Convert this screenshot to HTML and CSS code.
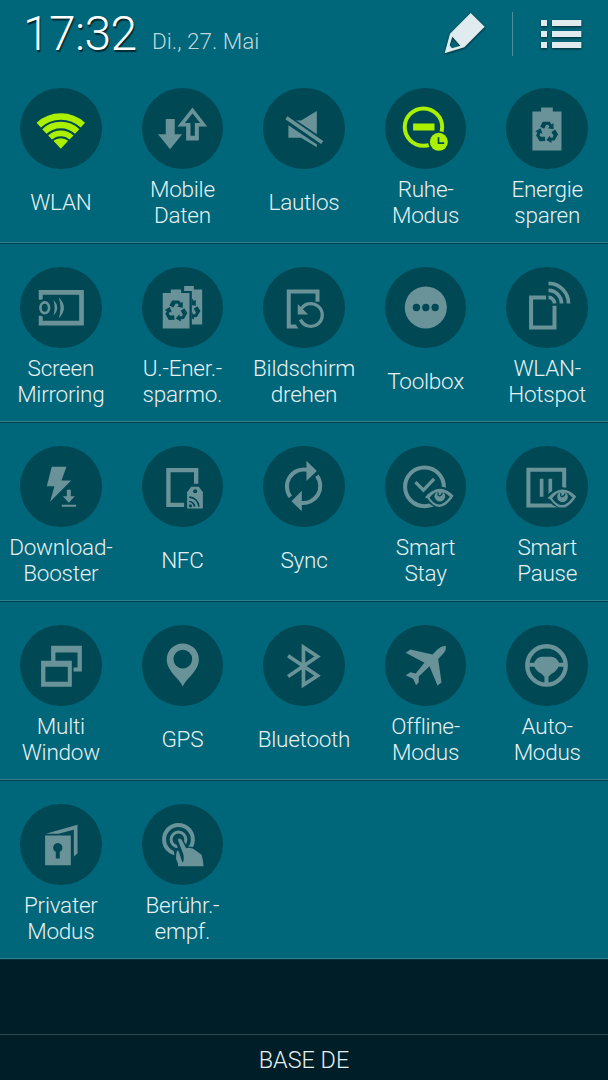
FILE: index.html
```
<!DOCTYPE html>
<html lang="de">
<head>
  <meta charset="UTF-8">
  <title>Schnelleinstellungen</title>
  <link rel="stylesheet" href="styles.css">
</head>
<body>
  <!-- shapes used by more than one icon -->
  <svg class="defs" width="0" height="0">
    <defs>
      <path id="arm" d="M-20-17-12-32H9L14-24 20-28 20-10 3-13 8-17 4-23-2-22-8-11z"/>
      <g id="recycle">
        <use href="#arm"/>
        <use href="#arm" transform="rotate(120)"/>
        <use href="#arm" transform="rotate(240)"/>
      </g>
      <g id="eye">
        <path class="cut" d="M-50-2Q0-63 52-4Q0 62-50-2z"/>
        <path d="M-43 0Q0-49 43-5L37 4Q0 53-35 3z"/>
        <path class="cut" d="M-29 1Q-2-36 32-2Q0 42-29 1z"/>
        <circle cx="2" cy="-4" r="16"/>
        <path class="cutline" d="M-3-15q-2 12 5 10t7-9" stroke-width="4"/>
      </g>
      <clipPath id="back"><path d="M149 60h40v120h-40z"/></clipPath>
    </defs>
  </svg>

  <div class="panel">
    <header class="header">
      <span class="clock">17:32</span>
      <span class="date">Di., 27. Mai</span>
      <svg class="pencil" viewBox="0 0 126 126"><path fill-rule="evenodd" d="M80 0l42 41-61 62-59 18L18 62zM25 71L17 97l7 9 25-8z"/></svg>
      <span class="separator"></span>
      <svg class="list" viewBox="0 0 123 87"><path d="M0 0h18v18H0zM33 0h88v18H33zM0 33h18v18H0zM33 33h88v18H33zM0 66h18v18H0zM33 66h88v18H33z"/></svg>
    </header>

    <div class="row">
      <div class="tile on">
        <svg class="icon" viewBox="0 0 244 244">
          <g class="line">
            <path stroke-width="19" d="M56 111A97 97 0 0 1 188 111"/>
            <path stroke-width="19" d="M73 130A71.500 71.500 0 0 1 171 130"/>
            <path stroke-width="17" d="M90 148A47 47 0 0 1 154 148"/>
          </g>
          <path d="M122 182L100 158A34 34 0 0 1 144 158z"/>
        </svg>
        <div class="label">WLAN</div>
      </div>
      <div class="tile">
        <svg class="icon" viewBox="0 0 244 244">
          <path d="M71 93h27v45h22l-36 45-36-45h23z"/>
          <path fill-rule="evenodd" d="M151 58l44 57h-25v42h-38v-42h-26zM151 76l-23 29h17v38h13v-38h16z"/>
        </svg>
        <div class="label">Mobile<br>Daten</div>
      </div>
      <div class="tile">
        <svg class="icon" viewBox="0 0 244 244">
          <path d="M76 97h38l47-28v108l-47-28H76z"/>
          <path class="cutline" stroke-width="25" d="M62 87l122 82"/>
          <path class="line" stroke-width="11" d="M70 89l107 74"/>
        </svg>
        <div class="label">Lautlos</div>
      </div>
      <div class="tile on">
        <svg class="icon" viewBox="0 0 244 244">
          <circle class="line" cx="115" cy="117" r="56" stroke-width="12"/>
          <path d="M84 106h64v21H84z"/>
          <circle class="cut" cx="161" cy="161" r="32"/>
          <circle cx="161" cy="161" r="27"/>
          <path class="cutline" stroke-width="5" d="M160 147v18h17"/>
        </svg>
        <div class="label">Ruhe-<br>Modus</div>
      </div>
      <div class="tile">
        <svg class="icon" viewBox="0 0 244 244">
          <path d="M79 70h26V58h35v12h26v117H79z"/>
          <use class="cut" href="#recycle" transform="translate(122 133)"/>
        </svg>
        <div class="label">Energie<br>sparen</div>
      </div>
    </div>

    <div class="row">
      <div class="tile">
        <svg class="icon" viewBox="0 0 244 244">
          <path fill-rule="evenodd" d="M56 69h135v106H56zM68 83v78h109V83z"/>
          <path class="cut" d="M50 98h20v48H50z"/>
          <ellipse class="cut" cx="74" cy="122" rx="22" ry="27"/>
          <ellipse class="line" cx="74" cy="122" rx="13" ry="16" stroke-width="8"/>
          <path d="M100 98q23 24 0 48 7-24 0-48zM116 91q31 31 0 62 10-31 0-62z"/>
        </svg>
        <div class="label">Screen<br>Mirroring</div>
      </div>
      <div class="tile">
        <svg class="icon" viewBox="0 0 244 244">
          <path d="M62 78h24V67h31v11h25v106H62z"/>
          <path d="M126 57h29v10h25v105h-31V72h-23z"/>
          <use class="cut" href="#recycle" transform="translate(102 132)"/>
          <g clip-path="url(#back)"><use class="cut" href="#recycle" transform="translate(141 126)"/></g>
        </svg>
        <div class="label">U.-Ener.-<br>sparmo.</div>
      </div>
      <div class="tile">
        <svg class="icon" viewBox="0 0 244 244">
          <path class="line" stroke-width="12" d="M77 178V73h86v105z"/>
          <path class="cut" d="M98 104h80v90h-66l-14-22z"/>
          <path class="line" stroke-width="10" d="M112 130A34 34 0 1 1 112 157"/>
          <path d="M104 111v31h31z"/>
        </svg>
        <div class="label">Bildschirm<br>drehen</div>
      </div>
      <div class="tile">
        <svg class="icon" viewBox="0 0 244 244">
          <circle cx="122" cy="121" r="63"/>
          <g class="cut"><circle cx="94" cy="121" r="11"/><circle cx="122" cy="121" r="11"/><circle cx="150" cy="121" r="11"/></g>
        </svg>
        <div class="label">Toolbox</div>
      </div>
      <div class="tile">
        <svg class="icon" viewBox="0 0 244 244">
          <path class="line" stroke-width="12" d="M120 91H75v90h70v-65"/>
          <g class="line" stroke-width="11">
            <path d="M127 49a60 60 0 0 1 60 60"/>
            <path d="M127 70a39 39 0 0 1 39 39"/>
            <path d="M127 91a18 18 0 0 1 18 18"/>
          </g>
        </svg>
        <div class="label">WLAN-<br>Hotspot</div>
      </div>
    </div>

    <div class="row">
      <div class="tile">
        <svg class="icon" viewBox="0 0 244 244">
          <path d="M95 62h44l-15 41h29l-63 64 13-47H80z"/>
          <path d="M140 131h12v19h12l-18 20-18-20h12zM125 176h43v6h-43z"/>
        </svg>
        <div class="label">Download-<br>Booster</div>
      </div>
      <div class="tile">
        <svg class="icon" viewBox="0 0 244 244">
          <path class="line" stroke-width="13" d="M126 176H79V72h83v41"/>
          <path d="M135 138l12-16h23l12 16v49h-47z"/>
          <circle class="cut" cx="159" cy="135" r="6"/>
          <circle class="cut" cx="145" cy="179" r="5"/>
          <path class="cutline" stroke-width="5" d="M141 166a16 16 0 0 1 16 16M141 153a29 29 0 0 1 29 29"/>
        </svg>
        <div class="label">NFC</div>
      </div>
      <div class="tile">
        <svg class="icon" viewBox="0 0 244 244">
          <path class="line" stroke-width="12" d="M132 71A51 51 0 0 0 82 152M112 170A51 51 0 0 0 161 89"/>
          <path d="M130 44l31 31-31 30zM116 134v61l-31-30z"/>
        </svg>
        <div class="label">Sync</div>
      </div>
      <div class="tile">
        <svg class="icon" viewBox="0 0 244 244">
          <circle class="line" cx="118" cy="122" r="58" stroke-width="12"/>
          <path class="line" stroke-width="10" d="M91 108l24 24 32-34"/>
          <use href="#eye" transform="translate(162 154)"/>
        </svg>
        <div class="label">Smart<br>Stay</div>
      </div>
      <div class="tile">
        <svg class="icon" viewBox="0 0 244 244">
          <path class="line" stroke-width="12" d="M67 71h107v107H67z"/>
          <path d="M101 98h11v54h-11zM127 98h11v54h-11z"/>
          <use href="#eye" transform="translate(167 156)"/>
        </svg>
        <div class="label">Smart<br>Pause</div>
      </div>
    </div>

    <div class="row">
      <div class="tile">
        <svg class="icon" viewBox="0 0 244 244">
          <path fill-rule="evenodd" d="M93 62h92v77h-92zM106 82v45h66V82z"/>
          <path class="cut" d="M76 112h84v62H76z"/>
          <path fill-rule="evenodd" d="M63 107h92v78H63zM76 125v45h67v-45z"/>
        </svg>
        <div class="label">Multi<br>Window</div>
      </div>
      <div class="tile">
        <svg class="icon" viewBox="0 0 244 244">
          <path d="M122 184C112 160 74 138 74 103A48 48 0 0 1 170 103C170 138 132 160 122 184z"/>
          <circle class="cut" cx="122" cy="102" r="28"/>
        </svg>
        <div class="label">GPS</div>
      </div>
      <div class="tile">
        <svg class="icon" viewBox="0 0 244 244">
          <path class="line" stroke-width="11" d="M75 92l88 60-42 27V66l42 28-88 60"/>
        </svg>
        <div class="label">Bluetooth</div>
      </div>
      <div class="tile">
        <svg class="icon" viewBox="0 0 244 244">
          <path d="M182 63Q169 60 157 73L142 88 76 73 62 83 118 113 92 145 76 141 62 150 84 161 93 180 101 171 101 154 133 123 157 181 169 172 159 102 176 84Q184 74 182 63z"/>
        </svg>
        <div class="label">Offline-<br>Modus</div>
      </div>
      <div class="tile">
        <svg class="icon" viewBox="0 0 244 244">
          <circle class="line" cx="121" cy="121" r="57.500" stroke-width="13"/>
          <path d="M66 113h18q9-18 22-18h30q14 0 23 18h18v12h-20q-6 14-21 21l-9 9v23h-12v-23l-9-9q-15-7-21-21H66z"/>
        </svg>
        <div class="label">Auto-<br>Modus</div>
      </div>
    </div>

    <div class="row last">
      <div class="tile">
        <svg class="icon" viewBox="0 0 244 244">
          <path d="M75 94h77v89H75zM77 89l95-27v86l-11 9V77l-46 12z"/>
          <path class="cut" d="M107 163v-20a14 14 0 1 1 12 0v20z"/>
        </svg>
        <div class="label">Privater<br>Modus</div>
      </div>
      <div class="tile">
        <svg class="icon" viewBox="0 0 244 244">
          <circle class="line" cx="109" cy="106" r="43" stroke-width="12"/>
          <circle class="line" cx="109" cy="106" r="22" stroke-width="9"/>
          <path class="cut" d="M98 102q10-16 22-1l15 26 28 2 28 20v46h-88l-8-55 12-8z"/>
          <path d="M107 107q6-8 12 1l13 24q10-3 21 2l25 18q5 14 6 34h-76q0-12-6-21-2-10 3-27l5 4 11 34q6-6 3-25z"/>
        </svg>
        <div class="label">Berühr.-<br>empf.</div>
      </div>
    </div>
  </div>

  <footer class="carrier">BASE DE</footer>
</body>
</html>
```
FILE: styles.css
```
html, body {
  height: 100%;
}

body {
  margin: 0;
  display: flex;
  flex-direction: column;
  background: #001e27;
  color: #e6f0f2;
  font-family: Roboto, "Liberation Sans", sans-serif;
  font-weight: 300;
  font-variant-ligatures: none;
}

.defs {
  position: absolute;
}

.panel {
  background: #006679;
}

/* clock, date and the two buttons */
.header {
  display: flex;
  box-sizing: border-box;
  height: 65px;
  padding: 0 26px 0 23px;
}

.clock {
  width: 129px;
  font-size: 48px;
  line-height: 67px;
  letter-spacing: -0.6px;
  color: #fff;
  text-shadow: 1px 2px 1px rgba(0,0,0,0.6);
}

.date {
  flex: 1;
  font-size: 22.500px;
  line-height: 83px;
  color: #bfd8dd;
}

.header svg {
  fill: #dfebee;
  filter: drop-shadow(0 1px 1px rgba(0,0,0,0.6));
}

.pencil {
  width: 42px;
  height: 42px;
  margin: 13px 26px 0 0;
}

.separator {
  width: 1px;
  height: 44px;
  margin: 12px 28px 0 0;
  background: #4b8f9c;
}

.list {
  width: 41px;
  height: 29px;
  margin-top: 20px;
}

/* toggles */
.row {
  display: grid;
  grid-template-columns: repeat(5, 1fr);
  box-sizing: border-box;
  height: 179px;
  padding-top: 22.6px;
  border-bottom: 1px solid #00434f;
  box-shadow: inset 0 -1px 0 #2c7f8e;
}

.row.last {
  border-bottom-color: #06323c;
}

.tile {
  display: flex;
  flex-direction: column;
  align-items: center;
}

.icon {
  width: 81.600px;
  height: 81.600px;
  border-radius: 50%;
  background: #004854;
  fill: #6a9299;
  stroke: none;
}

.line {
  fill: none;
  stroke: #6a9299;
}

.on .icon {
  fill: #aaf000;
}

.on .line {
  stroke: #aaf000;
}

.cut {
  fill: #004854;
}

.cutline {
  fill: none;
  stroke: #004854;
}

.label {
  display: flex;
  align-items: center;
  height: 52px;
  margin-top: 7px;
  font-size: 22.500px;
  line-height: 26px;
  letter-spacing: -0.25px;
  text-align: center;
}

.carrier {
  margin-top: auto;
  height: 45px;
  border-top: 1px solid #34484f;
  font-size: 23.400px;
  line-height: 50px;
  text-align: center;
}
```
